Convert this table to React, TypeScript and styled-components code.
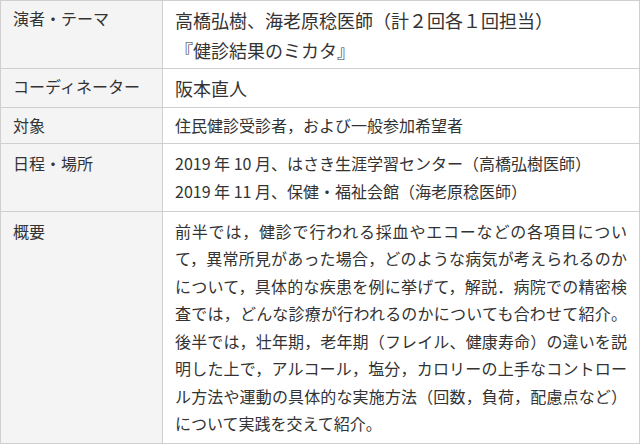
import React from 'react';
import styled, {createGlobalStyle} from 'styled-components';

const GlobalStyle = createGlobalStyle`
  html, body {
    margin: 0;
    padding: 0;
    background: #ffffff;
  }
  body {
    font-family: "Noto Sans CJK JP", "Noto Sans", sans-serif;
    color: #333333;
  }
`;

const borderColor = '#cfcfcf';

interface RowProps {
    readonly $pad: number;
}

const Table = styled.div`
  display: grid;
  grid-template-columns: 162px 477px;
  width: 640px;
  border-left: 1px solid ${borderColor};
  border-top: 1px solid ${borderColor};
  box-sizing: border-box;
`;

const Label = styled.div<RowProps>`
  background: #f4f4f4;
  border-right: 1px solid ${borderColor};
  border-bottom: 1px solid ${borderColor};
  padding: ${props => props.$pad}px 12px;
  font-size: 16px;
  line-height: 27.5px;
`;

const Content = styled.div<RowProps & {$large?: boolean}>`
  border-right: 1px solid ${borderColor};
  border-bottom: 1px solid ${borderColor};
  padding: ${props => props.$pad}px 12px;
  font-size: ${props => props.$large ? 18 : 16}px;
  line-height: ${props => props.$large ? 30 : 27.5}px;
  text-align: justify;
`;

interface Entry {
    readonly label: string;
    readonly lines: string[];
    readonly large?: boolean;
    readonly pad: number;
}

const entries: Entry[] = [
    {
        label: '演者・テーマ',
        lines: ['高橋弘樹、海老原稔医師（計２回各１回担当）', '『健診結果のミカタ』'],
        large: true,
        pad: 3.5,
    },
    {label: 'コーディネーター', lines: ['阪本直人'], large: true, pad: 4},
    {label: '対象', lines: ['住民健診受診者，および一般参加希望者'], pad: 3.75},
    {
        label: '日程・場所',
        lines: [
            '2019 年 10 月、はさき生涯学習センター（高橋弘樹医師）',
            '2019 年 11 月、保健・福祉会館（海老原稔医師）',
        ],
        pad: 6,
    },
    {
        label: '概要',
        lines: [
            '前半では，健診で行われる採血やエコーなどの各項目について，異常所見があった場合，どのような病気が考えられるのかについて，具体的な疾患を例に挙げて，解説．病院での精密検査では，どんな診療が行われるのかについても合わせて紹介。後半では，壮年期，老年期（フレイル、健康寿命）の違いを説明した上で，アルコール，塩分，カロリーの上手なコントロール方法や運動の具体的な実施方法（回数，負荷，配慮点など）について実践を交えて紹介。',
        ],
        pad: 5.5,
    },
];

export default function App() {
    return (
        <>
            <GlobalStyle/>
            <Table>
                {entries.map(entry => (
                    <React.Fragment key={entry.label}>
                        <Label $pad={entry.pad}>{entry.label}</Label>
                        <Content $pad={entry.pad} $large={entry.large}>
                            {entry.lines.map((line, i) => (
                                <React.Fragment key={i}>
                                    {i > 0 && <br/>}
                                    {line}
                                </React.Fragment>
                            ))}
                        </Content>
                    </React.Fragment>
                ))}
            </Table>
        </>
    );
}
